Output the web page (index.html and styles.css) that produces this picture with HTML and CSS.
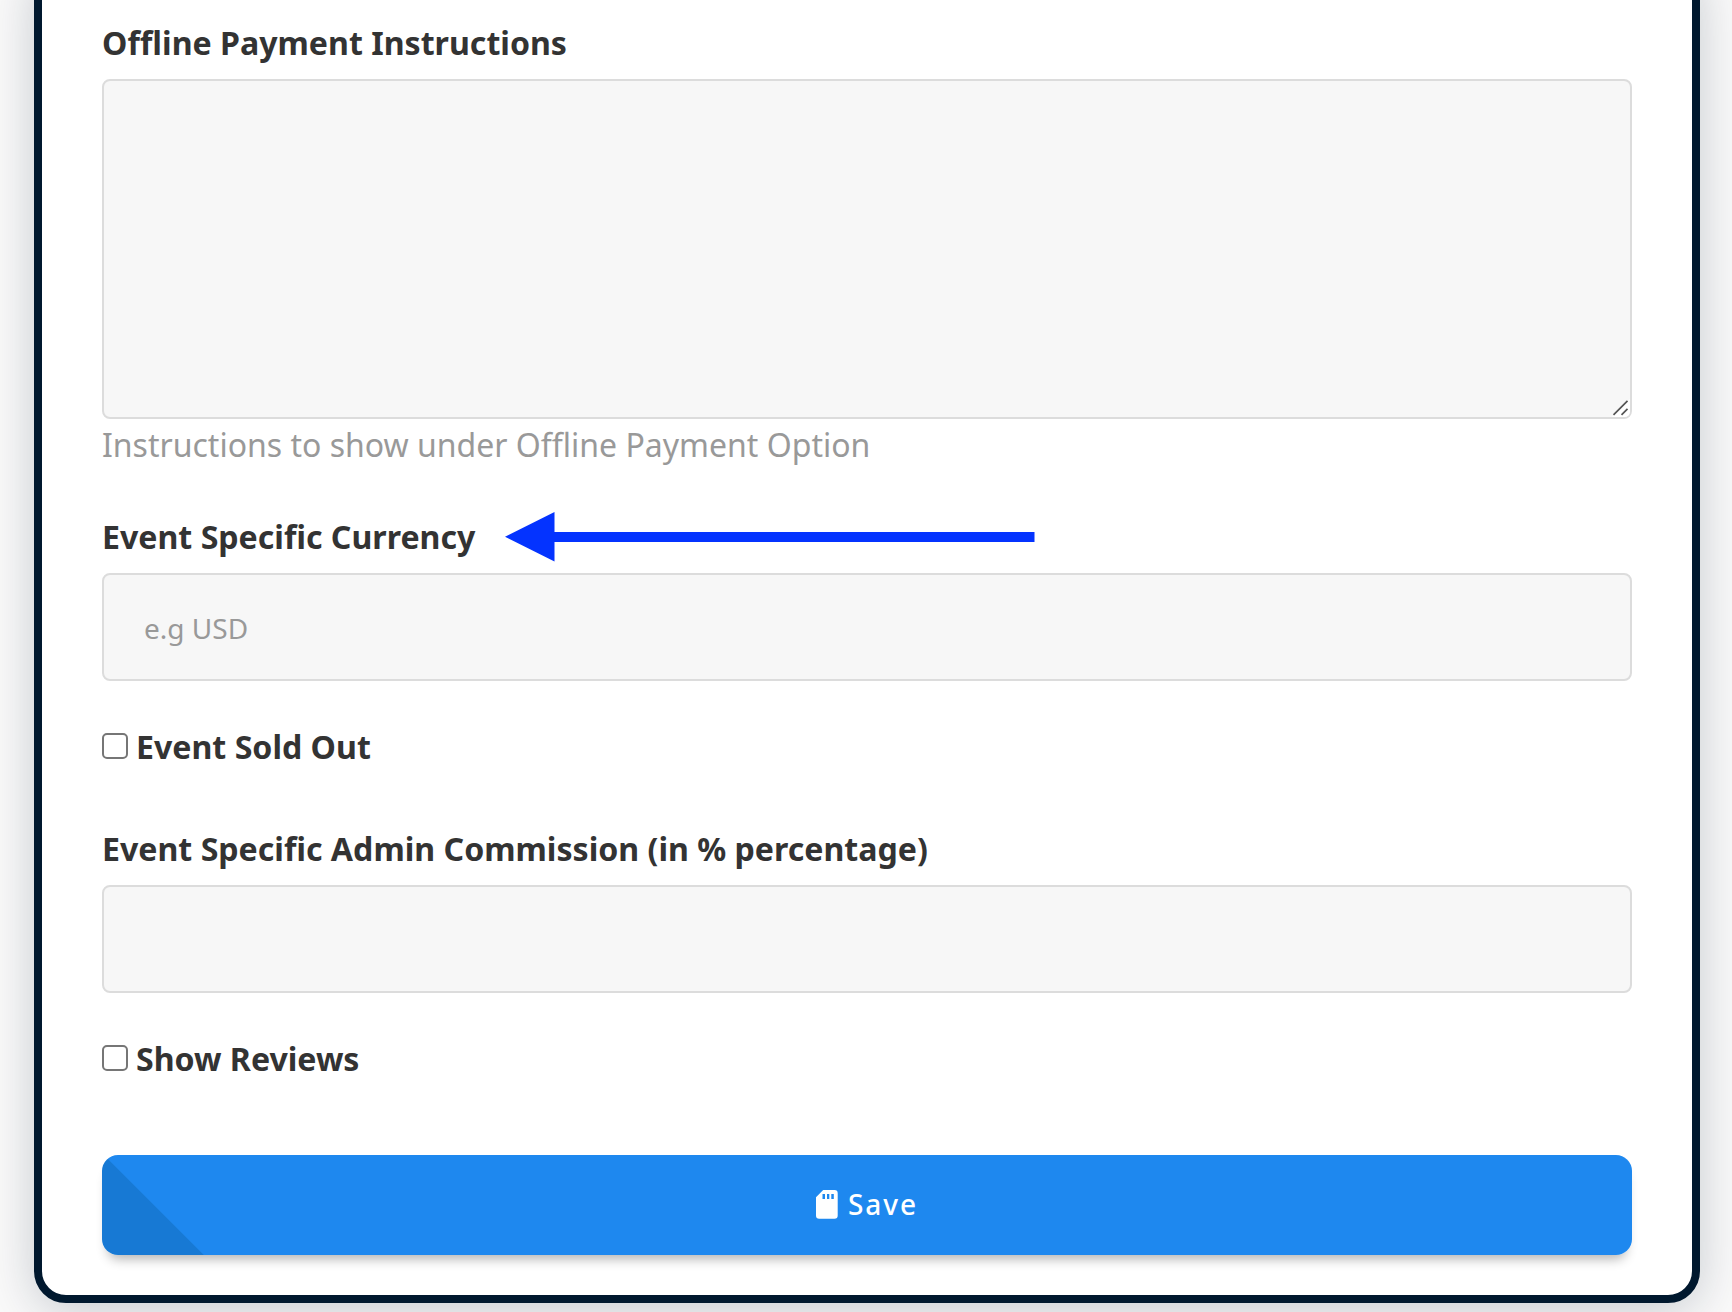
FILE: index.html
```html
<!DOCTYPE html>
<html lang="en">
<head>
<meta charset="utf-8">
<title>Event settings</title>
<link rel="stylesheet" href="styles.css">
</head>
<body>
<form class="card">
  <div class="field">
    <label class="label" for="offline">Offline Payment Instructions</label>
    <div class="area-wrap">
      <textarea class="control area" id="offline"></textarea>
      <svg class="grip" width="18" height="18" viewBox="0 0 18 18"><path d="M18 0V12Q18 18 12 18H0Z" fill="#fff"/><path d="M1.5 15.800L15.500 1.800M9.500 15.800L15.500 9.800" stroke="#555" stroke-width="1.700" fill="none"/></svg>
    </div>
    <p class="help">Instructions to show under Offline Payment Option</p>
  </div>
  <div class="field field-currency">
    <label class="label" for="currency">Event Specific Currency</label>
    <svg class="arrow" width="530" height="50" viewBox="0 0 530 50"><path d="M0 24.7L49.5 0V20H529.5V30H49.5V49.5Z" fill="#0433ff"/></svg>
    <input class="control" id="currency" type="text" placeholder="e.g USD">
  </div>
  <label class="check"><input class="box" type="checkbox"><span class="check-text">Event Sold Out</span></label>
  <div class="field field-commission">
    <label class="label" for="commission">Event Specific Admin Commission (in % percentage)</label>
    <input class="control" id="commission" type="text">
  </div>
  <label class="check"><input class="box" type="checkbox"><span class="check-text">Show Reviews</span></label>
  <button class="save" type="button">
    <svg class="save-icon" width="22" height="29" viewBox="0 0 22 29"><path fill="#fff" fill-rule="evenodd" d="M7.2 0H18.5A3.2 3.2 0 0 1 21.7 3.2V25.5A3.2 3.2 0 0 1 18.5 28.7H3.2A3.2 3.2 0 0 1 0 25.5V7.2ZM6.5 4V9H9V4ZM11 4V9H13.300V4ZM15.300 4V9H17.800V4Z"/></svg>
    <span>Save</span>
  </button>
</form>
</body>
</html>
```
FILE: styles.css
```css
* { box-sizing: border-box; }

body {
  margin: 0;
  height: 1312px;
  overflow: hidden;
  background: #fafafa;
  font-family: "Noto Sans", sans-serif;
  font-size: 32px;
  line-height: 44px;
  color: #333;
}

.card {
  display: flex;
  flex-direction: column;
  width: 1666px;
  height: 1343px;
  margin: -40px 0 0 34px;
  padding: 52px 60px 40px;
  background: #fff;
  border: 8px solid #00182e;
  border-radius: 32px;
  box-shadow: 0 8px 50px rgba(0, 24, 46, 0.21);
}

.field {
  position: relative;
  display: flex;
  flex-direction: column;
}

.label {
  height: 44px;
  margin-bottom: 15px;
  padding-top: 1px;
  font-size: 32.12px;
  font-weight: 700;
}

.control {
  display: block;
  width: 100%;
  height: 108px;
  padding: 2px 40px 0;
  background: #f7f7f7;
  border: 2px solid #dcdcdc;
  border-radius: 8px;
  font: 28px "Noto Sans", sans-serif;
  color: #333;
}

.control::placeholder { color: #999; opacity: 1; }

.area-wrap { position: relative; }

.area {
  height: 340px;
  resize: none;
}

.grip {
  position: absolute;
  right: 2px;
  bottom: 2px;
}

.help {
  margin: 4px 0 0;
  color: #999;
}

.field-currency { margin-top: 47px; }

.arrow {
  position: absolute;
  left: 403px;
  top: -2px;
}

.check {
  display: flex;
  align-items: center;
  gap: 8px;
  height: 44px;
  margin-top: 43px;
  font-size: 32.12px;
  font-weight: 700;
}

.check-text { padding-top: 2px; }

.box {
  appearance: none;
  width: 26px;
  height: 26px;
  margin: 0;
  background: #fff;
  border: 2px solid #767676;
  border-radius: 5px;
}

.field-commission { margin-top: 58px; }

.save {
  display: flex;
  align-items: center;
  justify-content: center;
  gap: 10px;
  width: 100%;
  height: 100px;
  margin-top: 75px;
  padding: 0 0 2px;
  border: 0;
  border-radius: 16px;
  background: linear-gradient(45deg, #1779d4 71.5px, #1e88ef 72.5px);
  box-shadow: 0 10px 12px -6px rgba(0, 0, 0, 0.3);
  color: #fff;
  font: 500 28px "Noto Sans", sans-serif;
  letter-spacing: 2px;
}
```
